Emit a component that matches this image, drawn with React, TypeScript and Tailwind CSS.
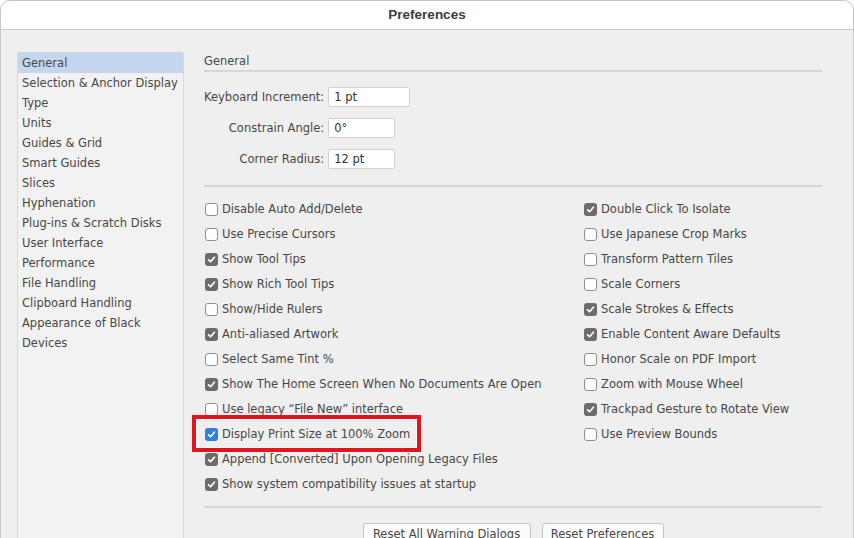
import React from "react";

const sidebarItems = [
  "General",
  "Selection & Anchor Display",
  "Type",
  "Units",
  "Guides & Grid",
  "Smart Guides",
  "Slices",
  "Hyphenation",
  "Plug-ins & Scratch Disks",
  "User Interface",
  "Performance",
  "File Handling",
  "Clipboard Handling",
  "Appearance of Black",
  "Devices",
];

type Opt = { label: string; checked: boolean; focus?: boolean };

const leftOptions: Opt[] = [
  { label: "Disable Auto Add/Delete", checked: false },
  { label: "Use Precise Cursors", checked: false },
  { label: "Show Tool Tips", checked: true },
  { label: "Show Rich Tool Tips", checked: true },
  { label: "Show/Hide Rulers", checked: false },
  { label: "Anti-aliased Artwork", checked: true },
  { label: "Select Same Tint %", checked: false },
  { label: "Show The Home Screen When No Documents Are Open", checked: true },
  { label: "Use legacy \u201CFile New\u201D interface", checked: false },
  { label: "Display Print Size at 100% Zoom", checked: true, focus: true },
  { label: "Append [Converted] Upon Opening Legacy Files", checked: true },
  { label: "Show system compatibility issues at startup", checked: true },
];

const rightOptions: Opt[] = [
  { label: "Double Click To Isolate", checked: true },
  { label: "Use Japanese Crop Marks", checked: false },
  { label: "Transform Pattern Tiles", checked: false },
  { label: "Scale Corners", checked: false },
  { label: "Scale Strokes & Effects", checked: true },
  { label: "Enable Content Aware Defaults", checked: true },
  { label: "Honor Scale on PDF Import", checked: false },
  { label: "Zoom with Mouse Wheel", checked: false },
  { label: "Trackpad Gesture to Rotate View", checked: true },
  { label: "Use Preview Bounds", checked: false },
];

function Box({ checked, focus }: { checked: boolean; focus?: boolean }) {
  if (!checked) {
    return (
      <span className="ml-px h-[13px] w-[13px] shrink-0 rounded-[3px] border border-[#8e8e8e] bg-white" />
    );
  }
  return (
    <span
      className={
        "ml-px flex h-[13px] w-[13px] shrink-0 items-center justify-center rounded-[3px] " +
        (focus ? "bg-[#2f7fe0]" : "bg-[#6c6c6c]")
      }
    >
      <svg width="9" height="9" viewBox="0 0 9 9">
        <polyline
          points="1.6,4.8 3.6,6.7 7.4,2.2"
          fill="none"
          stroke="white"
          strokeWidth="1.7"
          strokeLinecap="round"
          strokeLinejoin="round"
        />
      </svg>
    </span>
  );
}

function Row({ opt }: { opt: Opt }) {
  return (
    <div className="relative flex h-[25px] items-center gap-[4px]">
      <Box checked={opt.checked} focus={opt.focus} />
      <span className="whitespace-nowrap">{opt.label}</span>
      {opt.focus && (
        <span className="pointer-events-none absolute left-[-12px] top-[-7px] h-[37px] w-[229px] border-[4px] border-[#e2141c] shadow-[inset_0_0_0_1px_rgba(255,255,255,0.8)]" />
      )}
    </div>
  );
}

function Field({ label, value, w }: { label: string; value: string; w: string }) {
  return (
    <>
      <span className="whitespace-nowrap text-right leading-[20px]">{label}</span>
      <span
        className={
          "h-[20px] rounded-[2px] border border-[#d2d2d2] bg-white px-[5px] leading-[18px] text-[#333] " + w
        }
      >
        {value}
      </span>
    </>
  );
}

export default function App() {
  return (
    <div className="h-[538px] w-[854px] overflow-hidden bg-white">
      <div
        className="flex h-[560px] w-[854px] flex-col overflow-hidden rounded-t-[10px] border border-[#c6c6c6] bg-[#efefef] text-[11.5px] text-[#474747]"
        style={{ fontFamily: '"DejaVu Sans", Verdana, sans-serif' }}
      >
        <div className="flex h-[29px] shrink-0 items-center justify-center border-b border-[#cdcdcd] bg-white">
          <span
            className="text-[13.5px] font-bold text-[#3d3d3d]"
            style={{ fontFamily: '"Liberation Sans", Arial, sans-serif' }}
          >
            Preferences
          </span>
        </div>

        <div className="flex flex-1 pl-[16px] pt-[22px]">
          <ul className="h-[520px] w-[167px] shrink-0 border border-[#d9d9d9] bg-[#f2f2f2] text-[11.5px]">
            {sidebarItems.map((item, i) => (
              <li
                key={item}
                className={
                  "h-[20px] whitespace-nowrap pl-[4px] leading-[20px] " +
                  (i === 0 ? "bg-[#c4d6ee]" : "")
                }
              >
                {item}
              </li>
            ))}
          </ul>

          <div className="ml-[20px] w-[618px]">
            <div className="border-b-2 border-[#d7d7d7] pb-[1px] pt-[1px] leading-[16px]">General</div>

            <div className="mt-[15px] grid grid-cols-[auto_auto] items-center justify-start gap-x-[4px] gap-y-[11px]">
              <Field label="Keyboard Increment:" value="1 pt" w="w-[82px]" />
              <Field label="Constrain Angle:" value="0°" w="w-[67px]" />
              <Field label="Corner Radius:" value="12 pt" w="w-[67px]" />
            </div>

            <div className="mt-[16px] h-[2px] bg-[#d7d7d7]" />

            <div className="mt-[10px] flex">
              <div className="w-[379px]">
                {leftOptions.map((o) => (
                  <Row key={o.label} opt={o} />
                ))}
              </div>
              <div>
                {rightOptions.map((o) => (
                  <Row key={o.label} opt={o} />
                ))}
              </div>
            </div>

            <div className="mt-[9px] h-[2px] bg-[#d7d7d7]" />

            <div className="mt-[15px] flex justify-center gap-[11px]">
              <button className="h-[22px] w-[168px] rounded-[3px] border border-[#c3c3c3] bg-[#fbfbfb] leading-[20px]">
                Reset All Warning Dialogs
              </button>
              <button className="h-[22px] w-[122px] rounded-[3px] border border-[#c3c3c3] bg-[#fbfbfb] leading-[20px]">
                Reset Preferences
              </button>
            </div>
          </div>
        </div>
      </div>
    </div>
  );
}
